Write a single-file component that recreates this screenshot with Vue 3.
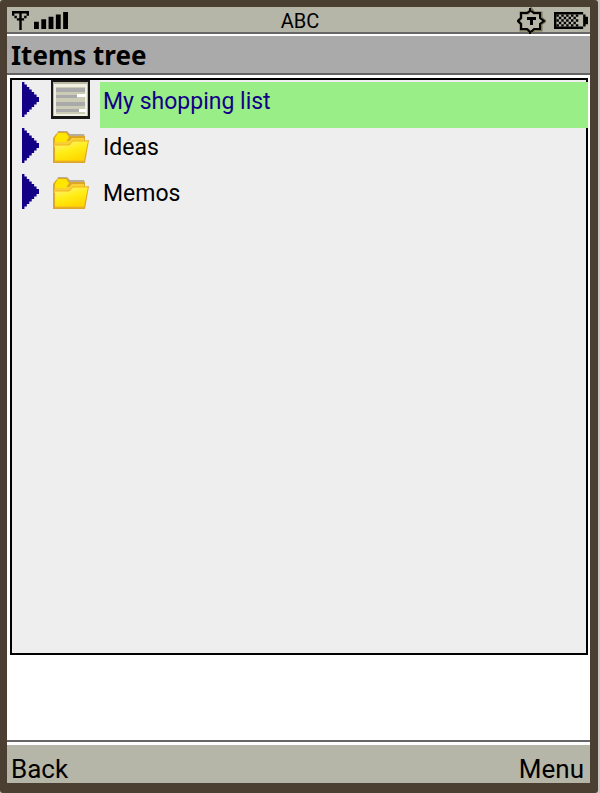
<script setup>
import { ref } from 'vue'

const items = [
  { id: 1, label: 'My shopping list', kind: 'list' },
  { id: 2, label: 'Ideas', kind: 'folder' },
  { id: 3, label: 'Memos', kind: 'folder' },
]
const selected = ref(1)
</script>

<template>
  <div class="phone">
    <main class="screen">
      <header class="status">
        <div class="status-side">
          <svg class="antenna" viewBox="0 0 7 8" preserveAspectRatio="none" aria-hidden="true">
            <path d="M0 0h7v1H0zM0 1h1v1H0zM6 1h1v1H6zM1 2h1v1H1zM5 2h1v1H5zM2 3h3v1H2zM3 1h1v7H3z" />
          </svg>
          <svg class="signal" viewBox="0 0 14 7" preserveAspectRatio="none" aria-hidden="true">
            <path d="M0 4h2v3H0zM3 3h2v4H3zM6 2h2v5H6zM9 1h2v6H9zM12 0h2v7h-2z" />
          </svg>
        </div>
        <span class="mode">ABC</span>
        <div class="status-side right">
          <svg class="badge" viewBox="0 0 29 27" aria-hidden="true">
            <path class="badge-shade" d="M14 2l3 4h7v5l4 3-4 3v6h-7l-3 3-3-3H4v-6l-3-3 3-3V6h7z" />
            <path class="badge-line" d="M13 1v3l-3 2H4v5l-3 3 3 3v5h6l3 3v2M14 4l3 2h6v5l4 3-4 3v5h-6l-3 3" />
            <path d="M10 10h9v3h-3v5h-3v-5h-3z" />
          </svg>
          <svg class="battery" viewBox="0 0 14 7" preserveAspectRatio="none" aria-hidden="true">
            <path fill-rule="evenodd" d="M0 0h12v1h1v1h1v3h-1v1h-1v1H0zM1 1v5h11V1z" />
            <path d="M1 1h1v1H1zM3 1h1v1H3zM5 1h1v1H5zM7 1h1v1H7zM9 1h1v1H9zM2 2h1v1H2zM4 2h1v1H4zM6 2h1v1H6zM8 2h1v1H8zM1 3h1v1H1zM3 3h1v1H3zM5 3h1v1H5zM7 3h1v1H7zM9 3h1v1H9zM2 4h1v1H2zM4 4h1v1H4zM6 4h1v1H6zM8 4h1v1H8zM1 5h1v1H1zM3 5h1v1H3zM5 5h1v1H5zM7 5h1v1H7zM9 5h1v1H9z" />
          </svg>
        </div>
      </header>
      <h1 class="title">Items tree</h1>
      <ul class="tree">
        <li v-for="item in items" :key="item.id" class="row">
          <button class="expand" type="button" :aria-label="'Expand ' + item.label">
            <svg class="arrow" viewBox="0 0 7 14" preserveAspectRatio="none" aria-hidden="true">
              <path d="M0 0h1v1h1v1h1v1h1v1h1v1h1v1h1v2H6v1H5v1H4v1H3v1H2v1H1v1H0z" />
            </svg>
          </button>
          <svg v-if="item.kind === 'list'" class="icon" viewBox="0 0 39 39" aria-hidden="true">
            <path fill="#181818" d="M0 0h39v39H0z" />
            <path fill="#b8b8a4" d="M2 2h35v34H2z" />
            <path fill="#f0f0e2" d="M3 4h33v32H3z" />
            <path fill="#ccccb6" d="M5 7h29v27H5z" />
            <path fill="#aaa" d="M5 8h29v4H5zM5 15h21v3H5zM5 22h29v4H5zM5 29h23v3H5z" />
            <path fill="#fff" d="M26 14h9v3h-9zM28 29h7v3h-7z" />
          </svg>
          <svg v-else class="icon" viewBox="0 0 39 39" aria-hidden="true">
            <defs>
              <linearGradient :id="'front' + item.id" x1="0" y1="0" x2="0.5" y2="1">
                <stop offset="0" stop-color="#fff389" />
                <stop offset="0.55" stop-color="#ffed16" />
                <stop offset="1" stop-color="#ffd800" />
              </linearGradient>
            </defs>
            <path fill="#b9ad98" d="M7 5h9l3 3h14l1 3H5z" />
            <path fill="#dca629" d="M2 12l3-4 3-2h8l3 4h15v5l4-1-4 23H2z" />
            <path fill="#f8d033" d="M4 15h14l3-3h12v4l-12 2-18 3z" />
            <path fill="#ffe600" d="M4 12l3-5h8l3 4-3 5H4z" />
            <path :fill="'url(#front' + item.id + ')'" d="M4 19h15l3-4h15l-4 20H4z" />
            <path fill="none" stroke="#f2b71c" d="M4 19h14l4-4h15M33 35H4" />
          </svg>
          <button
            type="button"
            class="label"
            :class="{ active: selected === item.id }"
            @click="selected = item.id"
          >{{ item.label }}</button>
        </li>
      </ul>
      <footer class="softkeys">
        <button type="button">Back</button>
        <button type="button">Menu</button>
      </footer>
    </main>
  </div>
</template>

<style>
body {
  background: #c9c7c4;
}
</style>

<style scoped>
.phone {
  box-sizing: border-box;
  min-height: 100vh;
  margin-right: 2px;
  padding: 7px 8px 10px 7px;
  display: flex;
  background: #4a3f30;
  border-radius: 3px;
  font-family: Roboto, sans-serif;
  color: #000;
}
.screen {
  flex: 1;
  display: flex;
  flex-direction: column;
  background: #fff;
}
.status {
  display: grid;
  grid-template-columns: 1fr auto 1fr;
  align-items: center;
  height: 25px;
  padding: 0 2px 0 5px;
  background: #b5b5a8;
  border-bottom: 2px solid #69666a;
}
.status-side {
  display: flex;
  align-items: center;
  gap: 5px;
}
.right {
  justify-content: flex-end;
  gap: 8px;
}
.antenna { width: 17px; height: 19px; }
.signal { width: 34px; height: 17px; }
.badge { width: 29px; height: 27px; }
.badge-shade { fill: none; stroke: #777451; stroke-width: 3; }
.badge-line { fill: none; stroke: #000; stroke-width: 2; }
.battery { width: 34px; height: 17px; }
.mode {
  font-size: 20px;
  line-height: 24px;
}
.title {
  margin: 2px 0 3px;
  padding: 0 4px;
  height: 37px;
  background: #aaa;
  border-bottom: 2px solid #656465;
  font-family: "Noto Sans", sans-serif;
  font-size: 26px;
  line-height: 38px;
  font-weight: 700;
}
.tree {
  flex: 1;
  margin: 0 2px 87px 3px;
  padding: 2px 0 0;
  list-style: none;
  background: #eee;
  border: 2px solid #000;
}
.row {
  display: flex;
  align-items: flex-start;
  height: 46px;
  margin-right: -2px;
}
button {
  margin: 0;
  padding: 0;
  border: 0;
  background: none;
  font: inherit;
  color: inherit;
  cursor: pointer;
}
.expand {
  margin: 0 12px 0 10px;
}
.arrow {
  display: block;
  width: 17px;
  height: 35px;
  fill: #130086;
}
.icon {
  width: 39px;
  height: 39px;
  margin: -2px 10px 0 0;
}
.label {
  flex: 1;
  height: 46px;
  padding: 0 3px 6px;
  text-align: left;
  font-size: 23px;
  line-height: 40px;
}
.label.active {
  background: #99ee88;
  color: #130086;
}
.softkeys {
  display: flex;
  justify-content: space-between;
  height: 38px;
  padding: 0 6px 0 4px;
  background: #b5b5a8;
  border-top: 3px solid #fff;
  box-shadow: 0 -2px #69666a;
  font-size: 26px;
  line-height: 48px;
}
</style>
